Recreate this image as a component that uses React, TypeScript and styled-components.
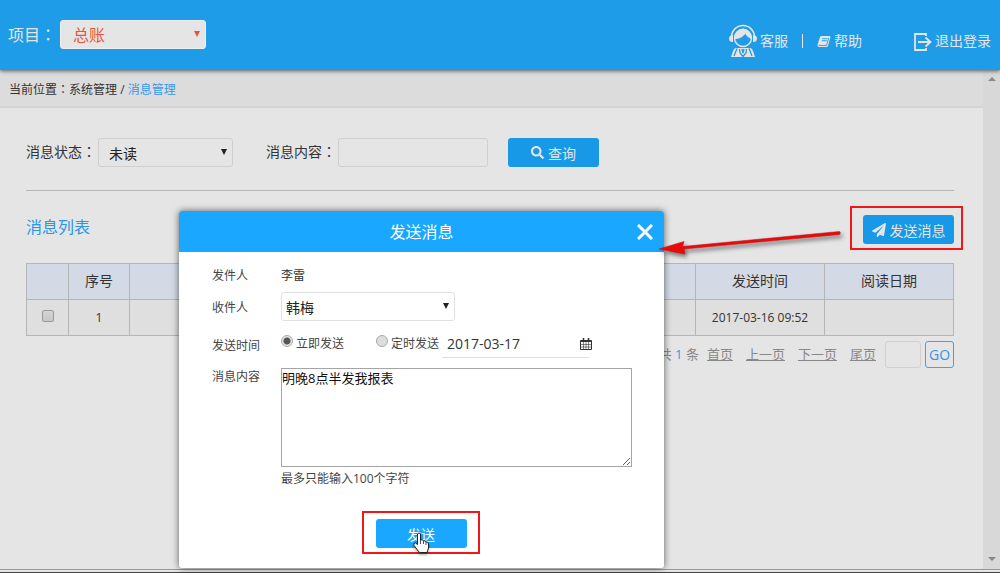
import React from "react";
import styled, { createGlobalStyle, css } from "styled-components";
import { FaPaperPlane, FaSearch } from "react-icons/fa";

const blue = "#1899e8";

const GlobalStyle = createGlobalStyle`
  *, *::before, *::after { box-sizing: border-box; }
  html, body, #root { height: 100%; }
  body { margin: 0; overflow: hidden; background: #e5e5e5; }
  body, button, input, select, textarea {
    font-family: "Open Sans", "Noto Sans CJK SC", sans-serif;
    font-weight: 400;
    color: #333;
  }
`;

const Page = styled.div`
  display: flex;
  flex-direction: column;
  height: 100%;
  position: relative;
  border-bottom: 1px solid #444;
`;

const Header = styled.header`
  display: flex;
  align-items: flex-start;
  justify-content: space-between;
  flex: none;
  height: 70px;
  padding: 20px 9px 0 8px;
  background: #1f9ce8;
  box-shadow: 0 1px 4px rgba(0, 0, 0, 0.6);
  z-index: 1;
`;

const Project = styled.label`
  display: flex;
  align-items: center;
  gap: 4px;
  font-size: 16px;
  line-height: 28px;
  color: #e5e5e5;
`;

const ColonMark = styled.span`
  font-family: "Noto Sans CJK TC", sans-serif;
  line-height: 1;
`;

const Caption = styled.span`
  white-space: nowrap;
`;

const SelectWrap = styled.span<{ $width: number; $tone?: string }>`
  position: relative;
  display: block;
  width: ${(p) => p.$width}px;
  color: ${(p) => p.$tone ?? "#222"};
  &::after {
    content: "";
    position: absolute;
    right: 6px;
    top: 11px;
    border: 3px solid transparent;
    border-top: 6px solid currentColor;
    border-bottom: 0;
    pointer-events: none;
  }
`;

const Select = styled.select<{ $size?: number; $indent?: number }>`
  appearance: none;
  display: block;
  width: 100%;
  height: 29px;
  padding: 1px 16px 0 ${(p) => p.$indent ?? 10}px;
  border: 1px solid #d0d0d0;
  border-radius: 3px;
  background: transparent;
  color: inherit;
  font-size: ${(p) => p.$size ?? 14}px;
`;

const ProjectSelect = styled(Select)`
  background: #e5e5e5;
  border-color: #eee;
`;

const ReceiverSelect = styled(Select)`
  border-color: #e0e0e0;
`;

const Tools = styled.nav`
  display: flex;
  align-items: center;
  height: 42px;
`;

const Tool = styled.a<{ $gap?: number; $push?: number }>`
  display: flex;
  align-items: center;
  gap: ${(p) => p.$gap ?? 3}px;
  margin-left: ${(p) => p.$push ?? 0}px;
  color: #e5e5e5;
  font-size: 14px;
  line-height: 20px;
  text-decoration: none;
`;

const Bar = styled.span`
  width: 1px;
  height: 14px;
  margin: 0 14px;
  background: #e5e5e5;
`;

const Body = styled.div`
  display: flex;
  flex: 1;
  min-height: 0;
  border-bottom: 1px solid #999;
  margin-bottom: 2px;
`;

const Main = styled.main`
  flex: 1;
  min-width: 0;
`;

const Scroll = styled.div`
  display: flex;
  flex-direction: column;
  justify-content: space-between;
  align-items: center;
  width: 17px;
  padding: 7px 0 8px;
  background: #d8d8d8;
`;

const Crumbs = styled.div`
  height: 38px;
  padding-left: 9px;
  border-bottom: 2px solid #d3d3d3;
  background: #dcdcdc;
  font-size: 12px;
  line-height: 40px;
`;

const Here = styled.a`
  color: #3399ee;
  text-decoration: none;
`;

const Content = styled.section`
  padding: 30px 29px 0 26px;
`;

const Filters = styled.form`
  display: flex;
  height: 53px;
  border-bottom: 1px solid #b5b5b5;
`;

const Field = styled.label`
  display: flex;
  align-items: flex-start;
  gap: 2px;
  margin-right: 33px;
  font-size: 14px;
  line-height: 27px;
`;

const TextBox = styled.input<{ $width: number }>`
  width: ${(p) => p.$width}px;
  height: 29px;
  border: 1px solid #d0d0d0;
  border-radius: 3px;
  background: transparent;
`;

const Button = styled.button<{ $bright?: boolean }>`
  display: flex;
  align-items: center;
  justify-content: center;
  gap: 4px;
  width: 91px;
  height: 29px;
  padding: 0;
  border: 0;
  border-radius: 3px;
  background: ${(p) => (p.$bright ? "#19a7ff" : blue)};
  color: ${(p) => (p.$bright ? "#fff" : "#e5e5e5")};
  font-size: 14px;
`;

const Query = styled(Button)`
  margin-left: -13px;
`;

const ListHead = styled.div`
  display: flex;
  align-items: center;
  justify-content: space-between;
  height: 72px;
  padding-top: 2px;
`;

const ListTitle = styled.h2`
  margin: 0 0 4px;
  color: #2b95e6;
  font-size: 16px;
  font-weight: 400;
`;

const Callout = styled.div`
  padding: 7px 7px 4px 11px;
  border: 2px solid #f21616;
`;

const SendCallout = styled(Callout)`
  margin-right: -9px;
`;

const Table = styled.table`
  width: 100%;
  border-collapse: collapse;
  table-layout: fixed;
  text-align: center;
  th, td {
    height: 36px;
    padding: 0;
    border: 1px solid #b5b5b5;
  }
  th {
    padding-bottom: 3px;
    background: #d3dae6;
    font-size: 14px;
    font-weight: 400;
  }
  td {
    background: #dfdfdf;
    font-size: 12px;
  }
`;

const Check = styled.input`
  appearance: none;
  width: 12px;
  height: 12px;
  margin: 0 0 4px;
  vertical-align: middle;
  border: 1px solid #999;
  border-radius: 2px;
  background: linear-gradient(#d4d4d4, #c6c6c6);
`;

const Pager = styled.div`
  display: flex;
  align-items: center;
  justify-content: flex-end;
  margin-top: 5px;
  font-size: 13px;
  line-height: 25px;
  color: #888;
`;

const PageLink = styled.a`
  margin-right: 13px;
  color: #888;
  text-decoration: underline;
`;

const Total = styled.span`
  margin-right: 8px;
  b {
    font-weight: 400;
    color: #3399ee;
  }
`;

const PageBox = styled(TextBox)`
  height: 27px;
  margin-left: -4px;
`;

const Go = styled.button`
  width: 29px;
  height: 27px;
  margin-left: 4px;
  padding: 0;
  border: 1px solid #3ba5ea;
  border-radius: 3px;
  background: transparent;
  color: #3a94e0;
  font-size: 14px;
`;

const Dialog = styled.div`
  position: absolute;
  left: 179px;
  top: 211px;
  bottom: 4px;
  width: 485px;
  border-radius: 3px;
  background: #fff;
  box-shadow: 0 0 7px rgba(0, 0, 0, 0.6);
  z-index: 2;
`;

const DialogHead = styled.div`
  display: flex;
  align-items: center;
  height: 41px;
  padding: 0 11px 0 27px;
  border-radius: 3px 3px 0 0;
  background: #19a7ff;
  h2 {
    flex: 1;
    margin: 0;
    padding-bottom: 2px;
    text-align: center;
    color: #fff;
    font-size: 16px;
    font-weight: 400;
  }
`;

const Close = styled.button`
  display: flex;
  padding: 0;
  border: 0;
  background: none;
`;

const Form = styled.form`
  display: flex;
  flex-direction: column;
  padding: 10px 32px 0 33px;
`;

const Row = styled.div<{ $height: number; $line?: number }>`
  display: grid;
  grid-template-columns: 69px 1fr;
  align-items: start;
  height: ${(p) => p.$height}px;
  font-size: 12px;
  line-height: ${(p) => p.$line ?? 28}px;
`;

const label = css`
  font-size: 12px;
  color: #444;
`;

const Label = styled.label`
  ${label}
`;

const Times = styled.div`
  display: flex;
  align-items: flex-start;
`;

const Choice = styled.label<{ $width: number }>`
  ${label}
  display: flex;
  gap: 3px;
  width: ${(p) => p.$width}px;
  line-height: 28px;
`;

const Radio = styled.input`
  appearance: none;
  width: 12px;
  height: 12px;
  margin: 5px 0 0;
  border: 1px solid #aaa;
  border-radius: 50%;
  background: #ddd;
  &:checked {
    background: radial-gradient(circle, #555 0 3px, #e4e4e4 4px);
  }
`;

const DateField = styled.span`
  display: flex;
  align-items: center;
  width: 151px;
  height: 28px;
`;

const DateBox = styled.input`
  width: 147px;
  height: 28px;
  padding: 0 0 0 5px;
  border: 0;
  border-bottom: 1px solid #ddd;
  background: transparent;
  font-size: 14px;
`;

const CalendarIcon = styled.svg`
  flex: none;
  margin-left: -9px;
`;

const Message = styled.textarea`
  display: block;
  width: 100%;
  height: 99px;
  padding: 0;
  border: 1px solid #a5a5a5;
  color: #111;
  font-size: 13px;
  line-height: 18px;
`;

const Hint = styled.p`
  ${label}
  margin: 0 0 0 69px;
  line-height: 23px;
`;

const SubmitCallout = styled(Callout)`
  align-self: center;
  margin: 21px 3px 0 0;
  padding: 6px 11px 4px 12px;
`;

const Arrow = styled.svg`
  position: absolute;
  left: 655px;
  top: 220px;
  z-index: 3;
  filter: drop-shadow(2px 3px 2px rgba(0, 0, 0, 0.5));
`;

const Pointer = styled.svg`
  position: absolute;
  left: 412px;
  top: 531px;
  z-index: 3;
  filter: drop-shadow(0 2px 1px rgba(0, 0, 0, 0.3));
`;

const Agent = () => (
  <svg width="30" height="34" viewBox="0 0 30 34" fill="none" stroke="#e5e5e5">
    <path d="M3.500 13a11.500 11.500 0 0 1 23 0" strokeWidth="1.500" />
    <circle cx="15" cy="14" r="8.500" strokeWidth="1.400" />
    <path d="M6.500 14.500c5 0 9-2 11-6 .500 3 3 5 6 6a8.500 9.500 0 0 0-17 0z" fill="#e5e5e5" strokeWidth="1" />
    <path d="M5 11v7Q1 18 1 14.500T5 11zM25 11v7q4 0 4-3.500T25 11z" fill="#e5e5e5" stroke="none" />
    <path d="M8 24h14q2 0 3 3l2 6H3l2-6q1-3 3-3z" fill="#e5e5e5" stroke="none" />
    <path d="M9 24.500L6 32M21 24.500L24 32" stroke="#1f9ce8" strokeWidth="1.300" />
    <path d="M11.500 25l.5 4 3 3.500 3-3.500.5-4M14 25l1 4 1-4" stroke="#1f9ce8" strokeWidth="1.300" />
  </svg>
);

const Book = () => (
  <svg width="14" height="13" viewBox="0 0 14 13">
    <path d="M4.500 1h8q1.200.2.900 1.300L11 11q-.4 1-1.500 1h-7.500q-2-.3-1.500-2.300L3 2q.4-1 1.500-1z" fill="#e5e5e5" />
    <path d="M5.300 3.700h5.200M4.700 5.700h5.200M2 9.500q-.4 1 .8 1H9.500l2.300-7.500" fill="none" stroke="#1f9ce8" strokeWidth=".9" />
  </svg>
);

const Exit = () => (
  <svg width="18" height="19" viewBox="0 0 18 19" fill="none" stroke="#e5e5e5" strokeWidth="1.800">
    <path d="M12 4V2H1v16h11v-2M4 10h12M11.500 5.500L16.500 10l-5 4.500" />
  </svg>
);

const Calendar = () => (
  <CalendarIcon width="12" height="12" viewBox="0 0 12 12" fill="none" stroke="#333">
    <path d="M3.500 0v3M8.500 0v3" strokeWidth="1.600" />
    <path d="M.5 2.500h11v9H.5z" />
    <path d="M1 3h10" strokeWidth="2" />
    <path d="M3.500 4v7M6 4v7M8.500 4v7M1 6.500h10M1 9h10" strokeWidth=".6" />
  </CalendarIcon>
);

const Tri = ({ down = false }: { down?: boolean }) => (
  <svg width="8" height="4" viewBox="0 0 8 4" fill="#888">
    <path d={down ? "M0 0h8L4 4z" : "M0 4h8L4 0z"} />
  </svg>
);

const Colon = () => <ColonMark>：</ColonMark>;

export default function App() {
  return (
    <Page>
      <GlobalStyle />
      <Header>
        <Project>
          <Caption>项目<Colon /></Caption>
          <SelectWrap $width={146} $tone="#e8553e">
            <ProjectSelect $size={16} $indent={12}>
              <option>总账</option>
            </ProjectSelect>
          </SelectWrap>
        </Project>
        <Tools>
          <Tool href="#" $gap={2}><Agent />客服</Tool>
          <Bar />
          <Tool href="#"><Book />帮助</Tool>
          <Tool href="#" $push={52}><Exit />退出登录</Tool>
        </Tools>
      </Header>
      <Body>
        <Main>
          <Crumbs>当前位置<Colon />系统管理 / <Here href="#">消息管理</Here></Crumbs>
          <Content>
            <Filters>
              <Field>
                <Caption>消息状态<Colon /></Caption>
                <SelectWrap $width={135}>
                  <Select><option>未读</option></Select>
                </SelectWrap>
              </Field>
              <Field>
                <Caption>消息内容<Colon /></Caption>
                <TextBox $width={150} />
              </Field>
              <Query type="button"><FaSearch size={13} />查询</Query>
            </Filters>
            <ListHead>
              <ListTitle>消息列表</ListTitle>
              <SendCallout>
                <Button type="button"><FaPaperPlane size={14} />发送消息</Button>
              </SendCallout>
            </ListHead>
            <Table>
              <colgroup>
                <col width="42" />
                <col width="61" />
                <col />
                <col width="129" />
                <col width="129" />
              </colgroup>
              <thead>
                <tr><th /><th>序号</th><th /><th>发送时间</th><th>阅读日期</th></tr>
              </thead>
              <tbody>
                <tr>
                  <td><Check type="checkbox" aria-label="1" /></td>
                  <td>1</td>
                  <td />
                  <td>2017-03-16 09:52</td>
                  <td />
                </tr>
              </tbody>
            </Table>
            <Pager>
              <Total>共 <b>1</b> 条</Total>
              <PageLink href="#">首页</PageLink>
              <PageLink href="#">上一页</PageLink>
              <PageLink href="#">下一页</PageLink>
              <PageLink href="#">尾页</PageLink>
              <PageBox $width={36} aria-label="页" />
              <Go type="button">GO</Go>
            </Pager>
          </Content>
        </Main>
        <Scroll><Tri /><Tri down /></Scroll>
      </Body>
      <Dialog role="dialog">
        <DialogHead>
          <h2>发送消息</h2>
          <Close type="button" aria-label="关闭">
            <svg width="16" height="16" viewBox="0 0 16 16" stroke="#fff" strokeWidth="3">
              <path d="M1 1l14 14M15 1L1 15" />
            </svg>
          </Close>
        </DialogHead>
        <Form>
          <Row $height={30}><Label as="span">发件人</Label><span>李雷</span></Row>
          <Row $height={38} $line={31}>
            <Label htmlFor="receiver">收件人</Label>
            <SelectWrap $width={174}>
              <ReceiverSelect id="receiver" $indent={4}><option>韩梅</option></ReceiverSelect>
            </SelectWrap>
          </Row>
          <Row $height={38} $line={31}>
            <Label as="span">发送时间</Label>
            <Times>
              <Choice $width={95}>
                <Radio type="radio" name="when" defaultChecked />立即发送
              </Choice>
              <Choice $width={66}>
                <Radio type="radio" name="when" />定时发送
              </Choice>
              <DateField>
                <DateBox defaultValue="2017-03-17" aria-label="定时发送" />
                <Calendar />
              </DateField>
            </Times>
          </Row>
          <Row $height={99} $line={18}>
            <Label htmlFor="message">消息内容</Label>
            <Message id="message" defaultValue="明晚8点半发我报表" />
          </Row>
          <Hint>最多只能输入100个字符</Hint>
          <SubmitCallout>
            <Button type="button" $bright>发送</Button>
          </SubmitCallout>
        </Form>
      </Dialog>
      <Arrow width="195" height="40" viewBox="0 0 195 40">
        <path d="M184.500 11.500l1 1.500-1 1.500L29 29l1 5L4 29l25-7.500-1.500 5z" fill="#f00808" stroke="#b01010" strokeWidth="0.500" />
      </Arrow>
      <Pointer width="18" height="23" viewBox="0 0 18 23">
        <path d="M5.500 13.500V3q1.500-2.500 3 0v6q2-1 3 1 2-1 2.500 1 2.500-.5 2.500 2v4L15 21.500H7.500L2 14.500q-1-3 1.500-2.500z" fill="#fff" stroke="#222" />
        <path d="M8.500 9v4M11.500 10v3M14 11v3" stroke="#222" strokeWidth=".8" />
      </Pointer>
    </Page>
  );
}
